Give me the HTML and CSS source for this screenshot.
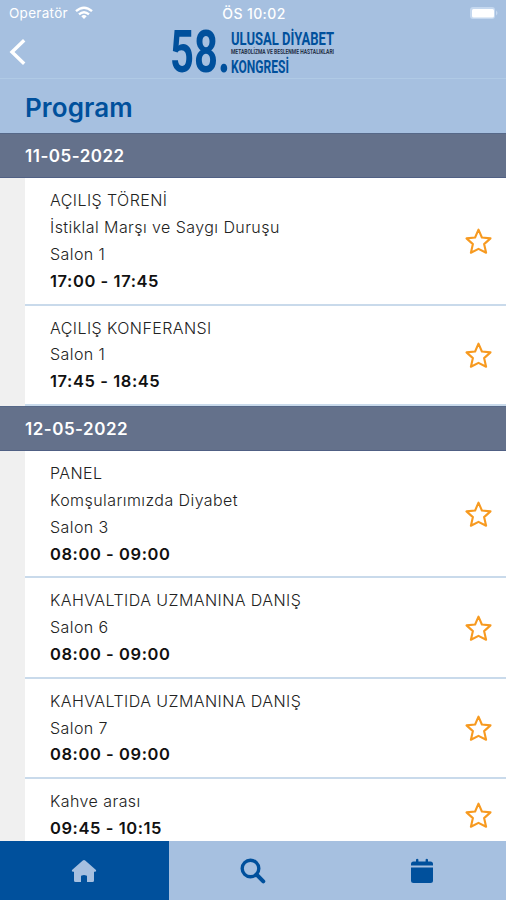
FILE: index.html
```html
<!DOCTYPE html>
<html lang="tr">
<head>
  <meta charset="UTF-8">
  <meta name="viewport" content="width=device-width, initial-scale=1.0">
  <title>Program</title>
  <link rel="stylesheet" href="styles.css">
</head>
<body>
  <svg width="0" height="0" class="symbols">
    <symbol id="star" viewBox="0 0 28 28">
      <path d="M14.5 2.7L17.9 10.5L26.5 11.4L20.1 17.1L22.1 25.7L14.5 21.9L6.9 25.7L8.9 17.1L2.5 11.4L11.1 10.5Z" fill="none" stroke="#f79a20" stroke-width="2.1" stroke-linejoin="round"/>
    </symbol>
  </svg>

  <header class="header">
    <div class="status">
      <div class="carrier">
        <span>Operatör</span>
        <svg width="18" height="14" viewBox="0 0 18 14" fill="none" stroke="#fff" stroke-width="2.4">
          <path d="M1 5.2Q9 -1.9 17 5.2"/>
          <path d="M4 8.4Q9 4 14 8.4"/>
          <path d="M9 13L6.3 10.2Q9 8 11.7 10.2Z" fill="#fff" stroke="none"/>
        </svg>
      </div>
      <span class="clock">ÖS 10:02</span>
      <svg class="battery" width="30" height="14" viewBox="0 0 30 14">
        <rect x="1" y="1" width="25" height="12" rx="3" fill="#c5d8ef"/>
        <rect x="3" y="3" width="22" height="8.5" rx="1.5" fill="#fff"/>
        <path d="M27 4.5Q30 7 27 9.5Z" fill="#c5d8ef"/>
      </svg>
    </div>
    <div class="navbar">
      <svg class="back" width="18" height="28" viewBox="0 0 18 28" fill="none" stroke="#fff" stroke-width="3.4">
        <path d="M15.2 2.2L3 14L15.2 25.8"/>
      </svg>
      <svg class="logo" width="166" height="50" viewBox="0 0 166 50" fill="#00509c">
        <text class="logo-number" x="0" y="45" textLength="60" lengthAdjust="spacingAndGlyphs">58.</text>
        <text class="logo-text" x="61" y="17.5" textLength="103" lengthAdjust="spacingAndGlyphs">ULUSAL DİYABET</text>
        <text class="logo-small" x="61" y="27.3" textLength="103" lengthAdjust="spacingAndGlyphs">METABOLİZMA VE BESLENME HASTALIKLARI</text>
        <text class="logo-text" x="61" y="45.5" textLength="58" lengthAdjust="spacingAndGlyphs">KONGRESİ</text>
      </svg>
    </div>
  </header>

  <h1 class="title">Program</h1>

  <main class="program">
    <h2 class="date">11-05-2022</h2>
    <div class="sessions">
      <div class="session">
        <div class="info">
          <p>AÇILIŞ TÖRENİ</p>
          <p>İstiklal Marşı ve Saygı Duruşu</p>
          <p>Salon 1</p>
          <p class="time">17:00 - 17:45</p>
        </div>
        <svg class="star"><use href="#star"/></svg>
      </div>
      <div class="session">
        <div class="info">
          <p>AÇILIŞ KONFERANSI</p>
          <p>Salon 1</p>
          <p class="time">17:45 - 18:45</p>
        </div>
        <svg class="star"><use href="#star"/></svg>
      </div>
    </div>

    <h2 class="date">12-05-2022</h2>
    <div class="sessions">
      <div class="session">
        <div class="info">
          <p>PANEL</p>
          <p>Komşularımızda Diyabet</p>
          <p>Salon 3</p>
          <p class="time">08:00 - 09:00</p>
        </div>
        <svg class="star"><use href="#star"/></svg>
      </div>
      <div class="session">
        <div class="info">
          <p>KAHVALTIDA UZMANINA DANIŞ</p>
          <p>Salon 6</p>
          <p class="time">08:00 - 09:00</p>
        </div>
        <svg class="star"><use href="#star"/></svg>
      </div>
      <div class="session">
        <div class="info">
          <p>KAHVALTIDA UZMANINA DANIŞ</p>
          <p>Salon 7</p>
          <p class="time">08:00 - 09:00</p>
        </div>
        <svg class="star"><use href="#star"/></svg>
      </div>
      <div class="session">
        <div class="info">
          <p>Kahve arası</p>
          <p class="time">09:45 - 10:15</p>
        </div>
        <svg class="star"><use href="#star"/></svg>
      </div>
    </div>
  </main>

  <nav class="tabs">
    <a class="tab active">
      <svg width="26" height="24" viewBox="0 0 26 24">
        <path d="M11.8 1.6Q13 0.6 14.2 1.6L25 11Q25.8 12.6 24 12.8H23V21.5Q23 23 21.5 23H16V17.5Q16 16 13 16Q10 16 10 17.5V23H4.5Q3 23 3 21.5V12.8H2Q0.2 12.6 1 11Z" fill="#a6c0e0"/>
      </svg>
    </a>
    <a class="tab">
      <svg width="26" height="26" viewBox="0 0 26 26" fill="none" stroke="#00509c">
        <circle cx="10.5" cy="10.5" r="8.3" stroke-width="3.4"/>
        <path d="M16.5 16.5L23.3 23.3" stroke-width="4" stroke-linecap="round"/>
      </svg>
    </a>
    <a class="tab">
      <svg width="22" height="26" viewBox="0 0 22 26" fill="#00509c">
        <path d="M0 7.5V6Q0 3.5 2.5 3.5H5V1.5Q6.2 0 7.4 1.5V3.5H14.6V1.5Q15.8 0 17 1.5V3.5H19.5Q22 3.5 22 6V7.5Z"/>
        <path d="M0 9.5H22V22.5Q22 25 19.5 25H2.5Q0 25 0 22.5Z"/>
      </svg>
    </a>
  </nav>
</body>
</html>
```

FILE: styles.css
```css
* {
  box-sizing: border-box;
}

body {
  margin: 0;
  height: 100vh;
  display: flex;
  flex-direction: column;
  overflow: hidden;
  background: #f0f0f0;
  font-family: Inter, "Liberation Sans", sans-serif;
  color: #222;
}

h1, h2, p {
  margin: 0;
}

.symbols {
  position: absolute;
}

.header {
  flex: none;
  height: 79px;
  background: #a6c0e0;
  border-bottom: 1px solid #b0cae5;
}

.status {
  height: 26px;
  padding: 0 7px 0 9px;
  display: grid;
  grid-template-columns: 1fr auto 1fr;
  align-items: center;
  color: #fff;
  font-size: 13.5px;
}

.carrier {
  display: flex;
  align-items: center;
  gap: 7px;
  letter-spacing: 0.3px;
}

.clock {
  font-size: 14px;
  font-weight: 500;
  letter-spacing: 0.4px;
}

.battery {
  justify-self: end;
}

.navbar {
  height: 52px;
  padding: 0 9px;
  display: grid;
  grid-template-columns: 1fr auto 1fr;
  align-items: center;
}

.logo {
  overflow: visible;
}

.logo-number {
  font: bold 60px Roboto, sans-serif;
}

.logo-text {
  font: bold 18px Roboto, sans-serif;
}

.logo-small {
  font: bold 6.5px Roboto, sans-serif;
  fill: #25324a;
}

.title {
  flex: none;
  height: 54px;
  padding: 2px 25px 0;
  background: #a6c0e0;
  color: #00509c;
  font-size: 26px;
  font-weight: 600;
  line-height: 54px;
  letter-spacing: 0.1px;
}

.program {
  flex: 1;
  min-height: 0;
  overflow: hidden;
}

.date {
  height: 45.3px;
  padding-left: 25px;
  background: #64718b;
  border-top: 1px solid #566888;
  border-bottom: 1px solid #506084;
  color: #fff;
  font-size: 17px;
  font-weight: 600;
  line-height: 45px;
  letter-spacing: 0.5px;
}

.sessions {
  margin-left: 25px;
  background: #fff;
}

.session {
  padding: 9px 14px 8.6px 25px;
  display: flex;
  align-items: center;
  justify-content: space-between;
  border-bottom: 2px solid #c9daeb;
}

.info {
  font-size: 16px;
  font-weight: 300;
  line-height: 26.9px;
  letter-spacing: 0.43px;
}

.time {
  font-size: 16.5px;
  font-weight: 600;
  color: #111;
  letter-spacing: 0.58px;
}

.star {
  flex: none;
  width: 28px;
  height: 28px;
}

.tabs {
  flex: none;
  height: 59px;
  display: grid;
  grid-template-columns: repeat(3, 1fr);
}

.tab {
  display: flex;
  align-items: center;
  justify-content: center;
  background: #a6c0e0;
}

.tab.active {
  background: #00509c;
}
```
